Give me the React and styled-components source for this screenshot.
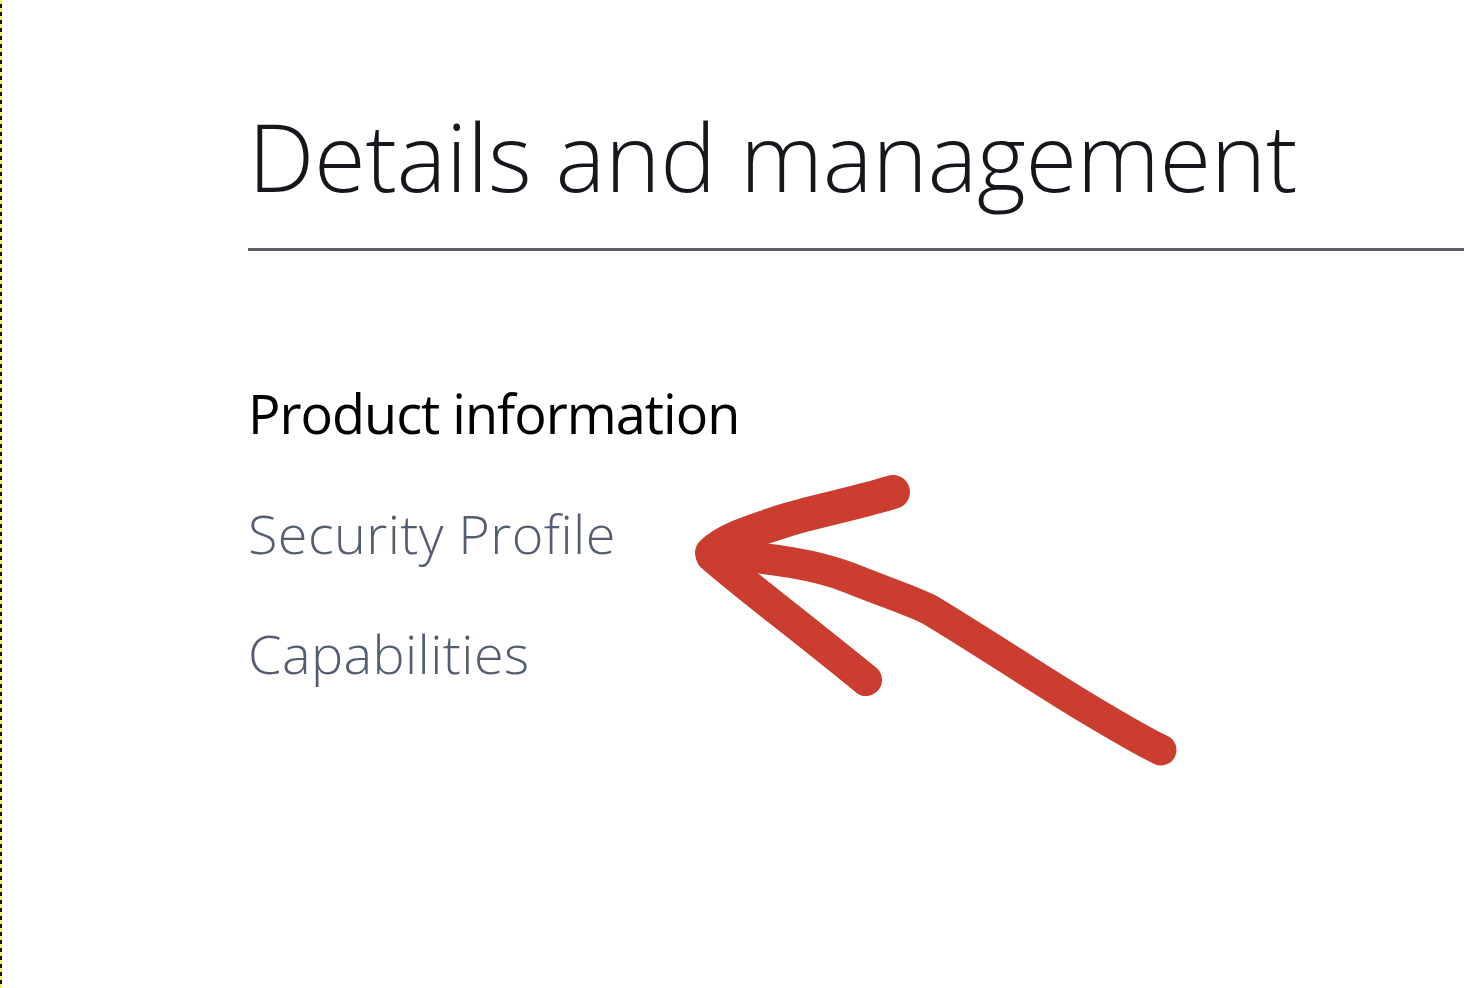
import React from 'react';
import styled, { createGlobalStyle } from 'styled-components';

const GlobalStyle = createGlobalStyle`
  html, body {
    margin: 0;
    padding: 0;
    background: #ffffff;
  }
  body {
    font-family: "Open Sans", "Liberation Sans", sans-serif;
  }
`;

const Page = styled.div`
  position: relative;
  display: flex;
  width: 1464px;
  height: 988px;
  overflow: hidden;
  background: #fff;
`;

const Stripe = styled.div`
  flex: 0 0 2px;
  background: repeating-linear-gradient(
    to bottom,
    #fbf53a 0px,
    #fbf53a 4px,
    #111 4px,
    #111 8px
  );
`;

const Content = styled.main`
  flex: 1;
  padding: 96px 0 0 246px;
`;

const Title = styled.h1`
  margin: 0;
  font-family: "Open Sans", sans-serif;
  font-weight: 300;
  font-size: 94px;
  line-height: 120px;
  letter-spacing: -0.3px;
  color: #16161d;
  white-space: nowrap;
`;

const Rule = styled.hr`
  margin: 32px 0 0;
  border: 0;
  height: 3px;
  background: #5f5f67;
`;

const Nav = styled.nav`
  display: flex;
  flex-direction: column;
  margin-top: 102px;
`;

const NavItem = styled.a`
  display: block;
  font-family: "Open Sans", sans-serif;
  font-size: 54px;
  line-height: 120px;
  height: 120px;
  text-decoration: none;
  white-space: nowrap;
  font-weight: ${(p) => (p.$active ? 500 : 300)};
  color: ${(p) => (p.$active ? '#000' : '#545e70')};
  letter-spacing: ${(p) => (p.$active ? '-1px' : '0.4px')};
`;

const Annotation = styled.svg`
  position: absolute;
  left: 0;
  top: 0;
  pointer-events: none;
`;

const RedArrow = () => (
  <Annotation width="1464" height="988" viewBox="0 0 1464 988">
    <g
      fill="none"
      stroke="#cb3d2e"
      strokeLinecap="round"
      strokeLinejoin="round"
    >
      <path strokeWidth="34" d="M893 492 C 850 505, 810 512, 780 522 C 750 532, 725 540, 712 553" />
      <path strokeWidth="32" d="M712 556 C 745 585, 790 618, 866 680" />
      <path
        strokeWidth="31"
        d="M714 553 C 760 558, 810 562, 850 578 C 890 594, 915 602, 930 610 C 980 640, 1040 680, 1090 710 C 1120 728, 1140 740, 1161 750"
      />
    </g>
  </Annotation>
);

const App = () => (
  <Page>
    <GlobalStyle />
    <Stripe />
    <Content>
      <Title>Details and management</Title>
      <Rule />
      <Nav>
        <NavItem $active href="#">Product information</NavItem>
        <NavItem href="#">Security Profile</NavItem>
        <NavItem href="#">Capabilities</NavItem>
      </Nav>
    </Content>
    <RedArrow />
  </Page>
);

export default App;
